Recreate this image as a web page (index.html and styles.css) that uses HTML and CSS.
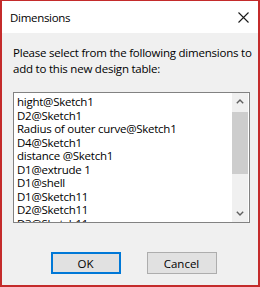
FILE: index.html
```html
<!DOCTYPE html>
<html>
<head>
<meta charset="utf-8">
<link rel="stylesheet" href="styles.css">
</head>
<body>
<div class="window">
  <div class="titlebar">
    <span class="title">Dimensions</span>
    <svg class="close" width="11" height="11" viewBox="0 0 11 11"><path d="M0.5 0.5 L10.5 10.5 M10.5 0.5 L0.5 10.5" stroke="#1a1a1a" stroke-width="1.1" fill="none"/></svg>
  </div>
  <div class="content">
    <p class="prompt">Please select from the following dimensions to add to this new design table:</p>
    <div class="listbox">
      <ul class="items">
        <li>hight@Sketch1</li>
        <li>D2@Sketch1</li>
        <li>Radius of outer curve@Sketch1</li>
        <li>D4@Sketch1</li>
        <li>distance @Sketch1</li>
        <li>D1@extrude 1</li>
        <li>D1@shell</li>
        <li>D1@Sketch11</li>
        <li>D2@Sketch11</li>
        <li>D3@Sketch11</li>
      </ul>
      <div class="scrollbar">
        <div class="arrow">
          <svg width="8" height="5" viewBox="0 0 8 5"><path d="M0.8 4.3 L4 1.1 L7.2 4.3" stroke="#606060" stroke-width="1.4" fill="none"/></svg>
        </div>
        <div class="track">
          <div class="thumb"></div>
        </div>
        <div class="arrow">
          <svg width="8" height="5" viewBox="0 0 8 5"><path d="M0.8 0.7 L4 3.9 L7.2 0.7" stroke="#606060" stroke-width="1.4" fill="none"/></svg>
        </div>
      </div>
    </div>
    <div class="buttons">
      <button class="btn btn-default">OK</button>
      <button class="btn">Cancel</button>
    </div>
  </div>
</div>
</body>
</html>
```
FILE: styles.css
```css
html, body {
  margin: 0;
  padding: 0;
  background: #ffffff;
}
.window {
  width: 260px;
  height: 287px;
  box-sizing: border-box;
  border-style: solid;
  border-color: #c42b2b;
  border-width: 1px 2px 2px 2px;
  display: flex;
  flex-direction: column;
  font-family: "Open Sans", "Noto Sans", sans-serif;
  color: #000;
}
.titlebar {
  height: 32px;
  background: #ffffff;
  display: flex;
  align-items: center;
  justify-content: space-between;
  padding: 0 8px 0 8px;
}
.title {
  font-size: 11.5px;
  letter-spacing: -0.3px;
}
.close {
  display: block;
  margin-right: 1px;
}
.content {
  flex: 1;
  background: #f0f0f0;
  padding: 12px 4px 0 11px;
  display: flex;
  flex-direction: column;
}
.prompt {
  margin: 0;
  font-size: 11.5px;
  line-height: 16px;
  letter-spacing: -0.22px;
}
.listbox {
  margin-top: 15px;
  width: 237px;
  height: 131px;
  box-sizing: border-box;
  border: 1px solid #828282;
  background: #ffffff;
  display: flex;
  overflow: hidden;
}
.items {
  flex: 1;
  list-style: none;
  margin: 0;
  padding: 2px 0 0 3px;
  font-size: 11.5px;
  line-height: 13.5px;
  letter-spacing: -0.25px;
  white-space: nowrap;
  overflow: hidden;
}
.scrollbar {
  width: 16px;
  margin: 0 1px 0 0;
  background: #f0f0f0;
  display: flex;
  flex-direction: column;
}
.arrow {
  height: 17px;
  display: flex;
  align-items: center;
  justify-content: center;
}
.track {
  flex: 1;
  padding-top: 2px;
}
.thumb {
  height: 62px;
  background: #cdcdcd;
}
.buttons {
  margin-top: 29px;
  width: 237px;
  display: flex;
  justify-content: center;
  gap: 26px;
  padding-left: 2px;
}
.btn {
  width: 70px;
  height: 22px;
  box-sizing: border-box;
  background: #e1e1e1;
  border: 1px solid #adadad;
  font-family: "Open Sans", "Noto Sans", sans-serif;
  font-size: 11.5px;
  color: #000;
  padding: 0;
}
.btn-default {
  border: 2px solid #0078d7;
}
```
